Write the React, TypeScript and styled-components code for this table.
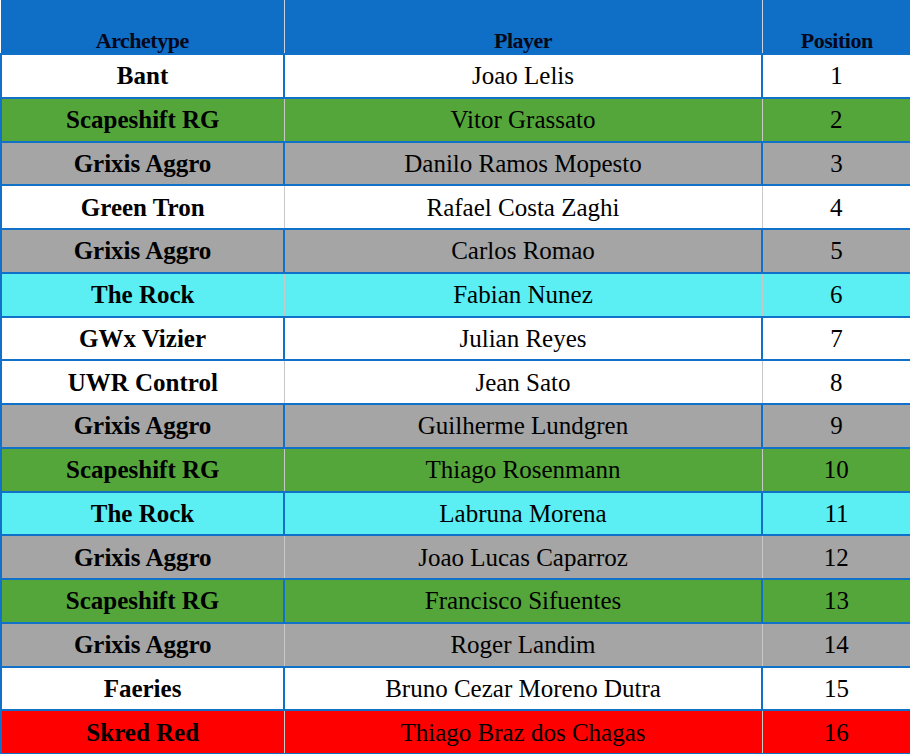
import styled, { createGlobalStyle } from "styled-components";

type Deck = "white" | "green" | "gray" | "cyan" | "red";

interface Entry {
  archetype: string;
  player: string;
  deck: Deck;
}

const entries: Entry[] = [
  { archetype: "Bant", player: "Joao Lelis", deck: "white" },
  { archetype: "Scapeshift RG", player: "Vitor Grassato", deck: "green" },
  { archetype: "Grixis Aggro", player: "Danilo Ramos Mopesto", deck: "gray" },
  { archetype: "Green Tron", player: "Rafael Costa Zaghi", deck: "white" },
  { archetype: "Grixis Aggro", player: "Carlos Romao", deck: "gray" },
  { archetype: "The Rock", player: "Fabian Nunez", deck: "cyan" },
  { archetype: "GWx Vizier", player: "Julian Reyes", deck: "white" },
  { archetype: "UWR Control", player: "Jean Sato", deck: "white" },
  { archetype: "Grixis Aggro", player: "Guilherme Lundgren", deck: "gray" },
  { archetype: "Scapeshift RG", player: "Thiago Rosenmann", deck: "green" },
  { archetype: "The Rock", player: "Labruna Morena", deck: "cyan" },
  { archetype: "Grixis Aggro", player: "Joao Lucas Caparroz", deck: "gray" },
  { archetype: "Scapeshift RG", player: "Francisco Sifuentes", deck: "green" },
  { archetype: "Grixis Aggro", player: "Roger Landim", deck: "gray" },
  { archetype: "Faeries", player: "Bruno Cezar Moreno Dutra", deck: "white" },
  { archetype: "Skred Red", player: "Thiago Braz dos Chagas", deck: "red" },
];

const deckColors: Record<Deck, string> = {
  white: "#ffffff",
  green: "#55a63a",
  gray: "#a5a5a5",
  cyan: "#5befF4",
  red: "#ff0000",
};

const BLUE = "#1170c8";

const GlobalStyle = createGlobalStyle`
  html, body {
    margin: 0;
    padding: 0;
    background: #ffffff;
  }
`;

const Table = styled.table`
  width: 910px;
  border-collapse: collapse;
  table-layout: fixed;
  font-family: "Liberation Serif", "Times New Roman", serif;
  color: #000;
`;

const HeadCell = styled.th`
  height: 53px;
  padding: 0;
  background: #0f6ec6;
  vertical-align: bottom;
  text-align: center;
  font-size: 22px;
  line-height: 24px;
  font-weight: 700;
  letter-spacing: -0.5px;
  color: #05081a;
  border-left: 1px solid #c9d3dd;
  border-right: 1px solid #c9d3dd;

  &:first-child {
    border-left: none;
  }
  &:last-child {
    border-right: none;
  }
`;

const Row = styled.tr<{ $deck: Deck; $boxed: boolean; $last: boolean }>`
  height: 43.75px;
  background: ${(p) => deckColors[p.$deck]};

  td {
    border-left: ${(p) => (p.$boxed ? `2px solid ${BLUE}` : "1px solid #c8c8c8")};
    border-right: ${(p) => (p.$boxed ? `2px solid ${BLUE}` : "1px solid #c8c8c8")};
    border-top: ${(p) => (p.$boxed ? `2px solid ${BLUE}` : "none")};
    border-bottom: ${(p) => (p.$boxed || p.$last ? `2px solid ${BLUE}` : "none")};
  }

  td:first-child {
    border-left: 2px solid ${BLUE};
  }
  td:last-child {
    border-right: 2px solid ${BLUE};
  }
`;

const Cell = styled.td<{ $bold?: boolean }>`
  padding: 1px 0 0;
  text-align: center;
  vertical-align: middle;
  font-size: 25px;
  line-height: 28px;
  font-weight: ${(p) => (p.$bold ? 700 : 400)};
  white-space: nowrap;
`;

export default function App() {
  return (
    <>
      <GlobalStyle />
      <Table>
        <colgroup>
          <col style={{ width: 283 }} />
          <col style={{ width: 478 }} />
          <col style={{ width: 149 }} />
        </colgroup>
        <thead>
          <tr>
            <HeadCell>Archetype</HeadCell>
            <HeadCell>Player</HeadCell>
            <HeadCell>Position</HeadCell>
          </tr>
        </thead>
        <tbody>
          {entries.map((e, i) => (
            <Row
              key={i}
              $deck={e.deck}
              $boxed={i % 2 === 0}
              $last={i === entries.length - 1}
            >
              <Cell $bold>{e.archetype}</Cell>
              <Cell>{e.player}</Cell>
              <Cell>{i + 1}</Cell>
            </Row>
          ))}
        </tbody>
      </Table>
    </>
  );
}
